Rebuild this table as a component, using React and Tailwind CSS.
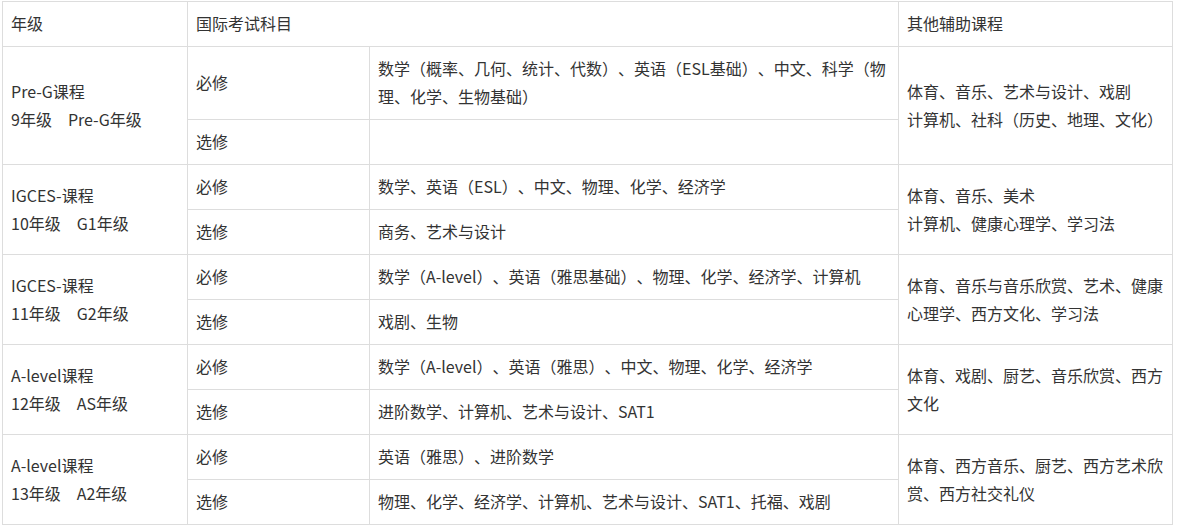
const rows = [
  {
    grade: ["Pre-G课程", "9年级\u3000Pre-G年级"],
    required: ["数学（概率、几何、统计、代数）、英语（ESL基础）、中文、科学（物", "理、化学、生物基础）"],
    elective: [],
    other: ["体育、音乐、艺术与设计、戏剧", "计算机、社科（历史、地理、文化）"],
  },
  {
    grade: ["IGCES-课程", "10年级\u3000G1年级"],
    required: ["数学、英语（ESL）、中文、物理、化学、经济学"],
    elective: ["商务、艺术与设计"],
    other: ["体育、音乐、美术", "计算机、健康心理学、学习法"],
  },
  {
    grade: ["IGCES-课程", "11年级\u3000G2年级"],
    required: ["数学（A-level）、英语（雅思基础）、物理、化学、经济学、计算机"],
    elective: ["戏剧、生物"],
    other: ["体育、音乐与音乐欣赏、艺术、健康", "心理学、西方文化、学习法"],
  },
  {
    grade: ["A-level课程", "12年级\u3000AS年级"],
    required: ["数学（A-level）、英语（雅思）、中文、物理、化学、经济学"],
    elective: ["进阶数学、计算机、艺术与设计、SAT1"],
    other: ["体育、戏剧、厨艺、音乐欣赏、西方", "文化"],
  },
  {
    grade: ["A-level课程", "13年级\u3000A2年级"],
    required: ["英语（雅思）、进阶数学"],
    elective: ["物理、化学、经济学、计算机、艺术与设计、SAT1、托福、戏剧"],
    other: ["体育、西方音乐、厨艺、西方艺术欣", "赏、西方社交礼仪"],
  },
];

function Lines({ lines }) {
  return lines.map((line, i) => (
    <div key={i} className="whitespace-nowrap">
      {line}
    </div>
  ));
}

const cell = "border border-[#dddddd] px-2 pt-[7px] pb-[9px] align-middle text-left font-normal";

export default function App() {
  return (
    <div
      className="min-h-screen bg-white pl-[2px] pt-[1px] text-[16px] leading-[28px] text-[#333333] [text-spacing-trim:space-all]"
      style={{ fontFamily: '"Noto Sans CJK SC", "Noto Sans", sans-serif' }}
    >
      <table className="w-[1170px] table-fixed border-collapse">
        <colgroup>
          <col className="w-[185px]" />
          <col className="w-[182px]" />
          <col className="w-[529px]" />
          <col className="w-[274px]" />
        </colgroup>
        <thead>
          <tr className="h-[45px]">
            <th className={cell}>年级</th>
            <th className={cell} colSpan={2}>
              国际考试科目
            </th>
            <th className={cell}>其他辅助课程</th>
          </tr>
        </thead>
        <tbody>
          {rows.map((row, idx) => (
            <GroupRows key={idx} row={row} first={idx === 0} />
          ))}
        </tbody>
      </table>
    </div>
  );
}

function GroupRows({ row, first }) {
  return (
    <>
      <tr className={first ? "h-[73px]" : "h-[45px]"}>
        <td className={cell} rowSpan={2}>
          <Lines lines={row.grade} />
        </td>
        <td className={cell}>必修</td>
        <td className={cell}>
          <Lines lines={row.required} />
        </td>
        <td className={cell} rowSpan={2}>
          <Lines lines={row.other} />
        </td>
      </tr>
      <tr className="h-[45px]">
        <td className={cell}>选修</td>
        <td className={cell}>
          <Lines lines={row.elective} />
        </td>
      </tr>
    </>
  );
}
